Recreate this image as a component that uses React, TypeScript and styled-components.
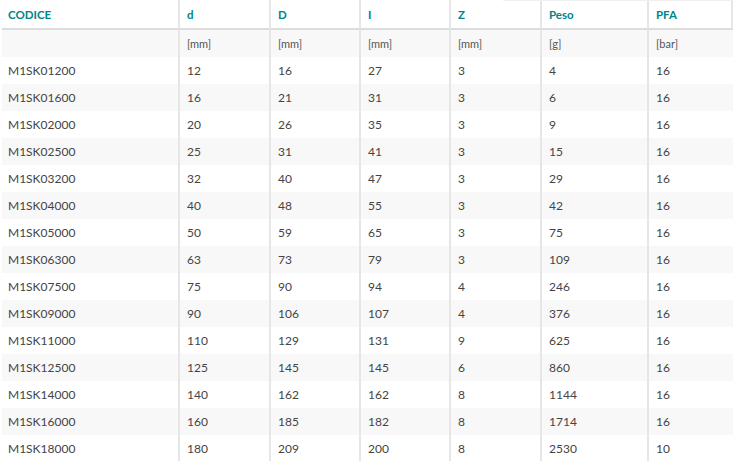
import React from "react";
import styled, { createGlobalStyle } from "styled-components";

const Global = createGlobalStyle`
  html, body { margin: 0; padding: 0; background: #fff; }
  body { font-family: Lato, "Open Sans", sans-serif; }
`;

const Wrap = styled.div`
  padding-left: 2px;
  width: 731px;
  position: relative;
  &::before {
    content: "";
    position: absolute;
    top: 0;
    left: 503px;
    width: 230px;
    height: 1px;
    background: #f0f0f0;
  }
`;

const Table = styled.table`
  width: 731px;
  border-collapse: separate;
  border-spacing: 0;
  table-layout: fixed;
  font-size: 12px;
  color: #444;
`;

const Th = styled.th`
  text-align: left;
  font-weight: 700;
  font-size: 11.5px;
  color: #00858a;
  height: 28px;
  padding: 0 7px;
  border-left: 2px solid #e6e6e6;
  border-bottom: 2px solid #dcdcdc;
  box-sizing: content-box;
  &:first-child { border-left: none; padding-left: 6px; }
  &:last-child { border-right: 2px solid #e6e6e6; }
`;

const Tr = styled.tr<{ $shade: boolean }>`
  background: ${(p) => (p.$shade ? "#f8f8f8" : "#fff")};
`;

const Td = styled.td<{ $unit?: boolean }>`
  height: 27px;
  padding: 0 7px;
  box-sizing: content-box;
  border-left: 2px solid #e6e6e6;
  font-size: ${(p) => (p.$unit ? "11px" : "12px")};
  color: ${(p) => (p.$unit ? "#555" : "#444")};
  white-space: nowrap;
  &:first-child { border-left: none; padding-left: 6px; }
`;

const widths = [176, 91, 90, 90, 91, 107, 86];
const heads = ["CODICE", "d", "D", "I", "Z", "Peso", "PFA"];
const units = ["", "[mm]", "[mm]", "[mm]", "[mm]", "[g]", "[bar]"];
const rows: (string | number)[][] = [
  ["M1SK01200", 12, 16, 27, 3, 4, 16],
  ["M1SK01600", 16, 21, 31, 3, 6, 16],
  ["M1SK02000", 20, 26, 35, 3, 9, 16],
  ["M1SK02500", 25, 31, 41, 3, 15, 16],
  ["M1SK03200", 32, 40, 47, 3, 29, 16],
  ["M1SK04000", 40, 48, 55, 3, 42, 16],
  ["M1SK05000", 50, 59, 65, 3, 75, 16],
  ["M1SK06300", 63, 73, 79, 3, 109, 16],
  ["M1SK07500", 75, 90, 94, 4, 246, 16],
  ["M1SK09000", 90, 106, 107, 4, 376, 16],
  ["M1SK11000", 110, 129, 131, 9, 625, 16],
  ["M1SK12500", 125, 145, 145, 6, 860, 16],
  ["M1SK14000", 140, 162, 162, 8, 1144, 16],
  ["M1SK16000", 160, 185, 182, 8, 1714, 16],
  ["M1SK18000", 180, 209, 200, 8, 2530, 10],
];

export default function App() {
  return (
    <>
      <Global />
      <Wrap>
        <Table>
          <colgroup>
            {widths.map((w, i) => (
              <col key={i} style={{ width: w }} />
            ))}
          </colgroup>
          <thead>
            <tr>
              {heads.map((h) => (
                <Th key={h}>{h}</Th>
              ))}
            </tr>
          </thead>
          <tbody>
            <Tr $shade>
              {units.map((u, i) => (
                <Td key={i} $unit>
                  {u}
                </Td>
              ))}
            </Tr>
            {rows.map((r, i) => (
              <Tr key={r[0] as string} $shade={i % 2 === 1}>
                {r.map((c, j) => (
                  <Td key={j}>{c}</Td>
                ))}
              </Tr>
            ))}
          </tbody>
        </Table>
      </Wrap>
    </>
  );
}
